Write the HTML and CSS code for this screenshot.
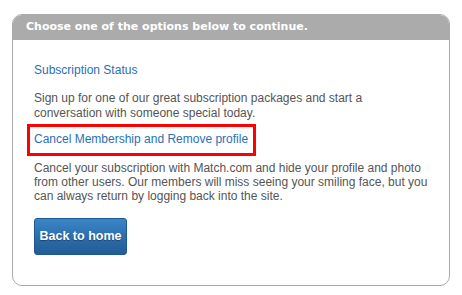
FILE: index.html
```html
<!DOCTYPE html>
<html>
<head>
<meta charset="utf-8">
<link rel="stylesheet" href="styles.css">
</head>
<body>
<div class="panel">
  <div class="panel-head">Choose one of the options below to continue.</div>
  <div class="panel-body">
    <a class="link first" href="#">Subscription Status</a>
    <p class="desc">Sign up for one of our great subscription packages and start a conversation with someone special today.</p>
    <div class="highlight"><a class="link" href="#">Cancel Membership and Remove profile</a></div>
    <p class="desc second">Cancel your subscription with Match.com and hide your profile and photo from other users. Our members will miss seeing your smiling face, but you can always return by logging back into the site.</p>
    <a class="btn" href="#">Back to home</a>
  </div>
</div>
</body>
</html>
```
FILE: styles.css
```css
html, body {
  margin: 0;
  padding: 0;
  background: #fff;
}
body {
  font-family: "Liberation Sans", Arial, sans-serif;
  font-size: 12px;
  line-height: 14.4px;
  color: #555;
}
.panel {
  margin: 14px 0 0 12px;
  width: 436px;
  border: 1px solid #aaa;
  border-radius: 10px;
  overflow: hidden;
}
.panel-head {
  background: #ababab;
  color: #fff;
  font-family: "DejaVu Sans", Verdana, sans-serif;
  font-weight: bold;
  font-size: 11px;
  height: 26px;
  line-height: 26px;
  margin-top: -1px;
  padding-left: 13px;
}
.panel-body {
  padding: 23px 20px 30px 21px;
  display: flex;
  flex-direction: column;
  align-items: flex-start;
}
.link {
  color: #2a6fb5;
  text-decoration: none;
}
.desc {
  margin: 14px 0 0 0;
}
.highlight {
  margin: 4px 0 0 -7px;
  border: 3px solid #f00;
  padding: 5px 5px 6px 4px;
}
.desc.second {
  margin-top: 5px;
}
.btn {
  margin-top: 14px;
  display: inline-block;
  width: 91px;
  height: 35px;
  line-height: 35px;
  text-align: center;
  border: 1px solid #1e5890;
  border-radius: 3px;
  background: linear-gradient(#3a86c8, #2a6aa8 60%, #235d95);
  color: #fff;
  font-weight: bold;
  font-size: 12.5px;
  text-decoration: none;
  text-shadow: 0 1px 1px rgba(0,0,0,0.35);
}
```
